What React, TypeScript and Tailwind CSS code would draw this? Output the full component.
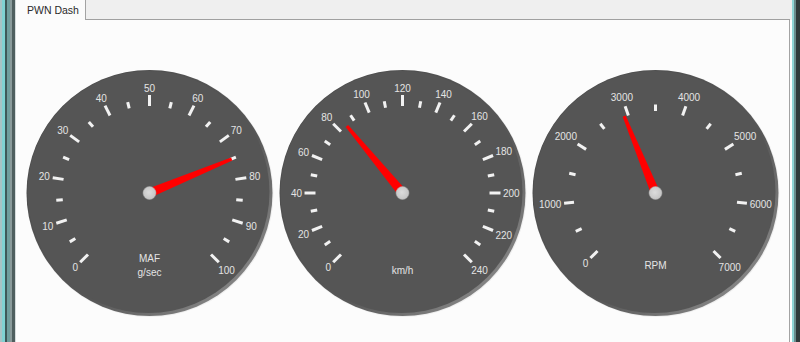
import React from "react";

type GaugeProps = {
  id: string;
  min: number;
  max: number;
  major: number;
  value: number;
  inner: number;
  majorLen: number;
  minorLen: number;
  needle: number;
  titles: { text: string; y: number }[];
};

const W = 253;
const H = 250;
const CX = 126.5;
const CY = 125;

function pt(r: number, deg: number) {
  const a = (deg * Math.PI) / 180;
  return [CX + r * Math.sin(a), CY - r * Math.cos(a)];
}

function Gauge({ id, min, max, major, value, inner, majorLen, minorLen, needle, titles }: GaugeProps) {
  const ang = (v: number) => -135 + (270 * (v - min)) / (max - min);
  const n = Math.round((max - min) / major);
  const ticks: React.ReactNode[] = [];
  const labels: React.ReactNode[] = [];
  for (let i = 0; i <= n; i++) {
    const v = min + i * major;
    const a = ang(v);
    const [x1, y1] = pt(inner, a);
    const [x2, y2] = pt(inner + majorLen, a);
    ticks.push(<line key={"M" + i} x1={x1} y1={y1} x2={x2} y2={y2} stroke="#f2f2f2" strokeWidth={3} />);
    const txt = String(v);
    const w = txt.length * 5.56;
    const h = 7.4;
    const rad = (a * Math.PI) / 180;
    const ext = Math.abs(Math.sin(rad)) * (w / 2) + Math.abs(Math.cos(rad)) * (h / 2);
    const [lx, ly] = pt(inner + majorLen + 2.5 + ext, a);
    labels.push(
      <text key={"L" + i} x={lx} y={ly + 3.6} textAnchor="middle" fontSize={10} fill="#e4e4e4" fontFamily="'Liberation Sans', Arial, sans-serif">
        {txt}
      </text>
    );
    if (i < n) {
      const am = ang(v + major / 2);
      const [a1, b1] = pt(inner, am);
      const [a2, b2] = pt(inner + minorLen, am);
      ticks.push(<line key={"m" + i} x1={a1} y1={b1} x2={a2} y2={b2} stroke="#f2f2f2" strokeWidth={3} />);
    }
  }
  const na = ang(value);
  return (
    <svg width={W} height={H} viewBox={`0 0 ${W} ${H}`} className="block shrink-0">
      <defs>
        <linearGradient id={id + "rim"} x1="0" y1="0" x2="1" y2="1">
          <stop offset="0" stopColor="#4a4a4a" />
          <stop offset="0.6" stopColor="#575757" />
          <stop offset="1" stopColor="#9c9c9c" />
        </linearGradient>
        <radialGradient id={id + "pin"} cx="0.45" cy="0.45" r="0.6">
          <stop offset="0" stopColor="#dcdcdc" />
          <stop offset="1" stopColor="#c2c2c2" />
        </radialGradient>
      </defs>
      <circle cx={CX + 0.5} cy={CY + 0.5} r={123.5} fill="#e6e6e6" opacity={0.6} />
      <circle cx={CX} cy={CY} r={123} fill={`url(#${id}rim)`} />
      <circle cx={CX - 1} cy={CY - 1} r={121} fill="#555555" />
      {ticks}
      {labels}
      {titles.map((t) => (
        <text key={t.text} x={CX} y={CY + t.y + 3.6} textAnchor="middle" fontSize={10} fill="#e4e4e4" fontFamily="'Liberation Sans', Arial, sans-serif">
          {t.text}
        </text>
      ))}
      <g transform={`rotate(${na} ${CX} ${CY})`}>
        <polygon
          points={`${CX - 4.5},${CY} ${CX - 1.6},${CY - needle} ${CX + 1.6},${CY - needle} ${CX + 4.5},${CY}`}
          fill="#ff0000"
        />
      </g>
      <circle cx={CX} cy={CY} r={6.5} fill={`url(#${id}pin)`} stroke="#a8a8a8" strokeWidth={0.5} />
    </svg>
  );
}

export default function App() {
  return (
    <div className="w-[800px] h-[342px] flex overflow-hidden bg-white" style={{ fontFamily: "'Liberation Sans', Arial, sans-serif" }}>
      {/* left window frame */}
      <div className="flex h-full shrink-0">
        <div className="w-[2px] bg-[#a7c3c5]" />
        <div className="w-[3px] bg-[#7fd2d2]" />
        <div className="w-[2px] bg-[#3e5858]" />
        <div className="w-[3px] bg-[#6f9d9d]" />
        <div className="w-[2px] bg-[#8a9b9b]" />
        <div className="w-[3px] bg-[#4f5f5f]" />
        <div className="w-[1px] bg-[#d6dcdc]" />
      </div>
      {/* main */}
      <div className="flex-1 flex flex-col min-w-0">
        <div className="h-[20px] flex shrink-0 bg-[#efefef]">
          <div className="w-[70px] bg-[#fbfbfb] border-r border-[#a3a3a3] flex items-center pl-[11px] pt-[2px] text-[10.5px] text-[#2a2a2a]">
            PWN Dash
          </div>
          <div className="flex-1 border-b border-[#a0a0a0] mr-[2px]" />
        </div>
        <div className="flex-1 bg-[#fcfcfc] border-r border-[#a3a3a3] mr-[2px] pl-[7px] pt-[48px] flex">
          <Gauge
            id="g1"
            min={0}
            max={100}
            major={10}
            value={75}
            inner={87}
            majorLen={11}
            minorLen={6.5}
            needle={89}
            titles={[
              { text: "MAF", y: 65 },
              { text: "g/sec", y: 79 },
            ]}
          />
          <Gauge
            id="g2"
            min={0}
            max={240}
            major={20}
            value={84.7}
            inner={87}
            majorLen={11}
            minorLen={6.5}
            needle={87}
            titles={[{ text: "km/h", y: 77 }]}
          />
          <Gauge
            id="g3"
            min={0}
            max={7000}
            major={1000}
            value={2925}
            inner={82}
            majorLen={10}
            minorLen={6.5}
            needle={83}
            titles={[{ text: "RPM", y: 72 }]}
          />
        </div>
      </div>
      {/* right window frame */}
      <div className="flex h-full shrink-0">
        <div className="w-[2px] bg-[#8fd6d6]" />
        <div className="w-[2px] bg-[#6a8c8c]" />
        <div className="w-[4px] bg-[#2f3b3b]" />
      </div>
    </div>
  );
}
